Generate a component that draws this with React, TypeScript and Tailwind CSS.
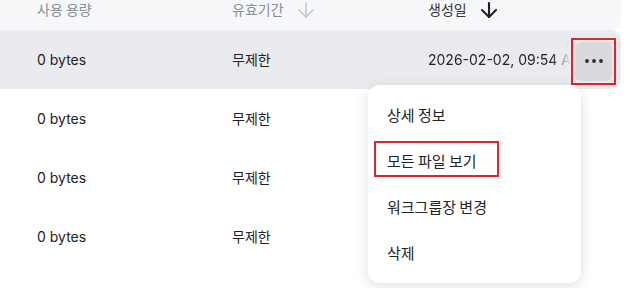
import React from 'react';
import { ArrowDown } from 'lucide-react';

const ROWS = [
  { size: '0 bytes', expiry: '무제한', created: '2026-02-02, 09:54 AM' },
  { size: '0 bytes', expiry: '무제한', created: '2026-02-02, 09:51 AM' },
  { size: '0 bytes', expiry: '무제한', created: '2026-02-02, 09:48 AM' },
  { size: '0 bytes', expiry: '무제한', created: '2026-02-02, 09:40 AM' },
  { size: '0 bytes', expiry: '무제한', created: '2026-02-01, 18:12 PM' },
];

const MENU = ['상세 정보', '모든 파일 보기', '워크그룹장 변경', '삭제'];

const App: React.FC = () => {
  return (
    <div
      className="relative w-[630px] h-[288px] overflow-hidden bg-white text-[14px] text-[#1f2126]"
      style={{ fontFamily: '"Noto Sans CJK KR", Inter, "Noto Sans", sans-serif' }}
    >
      <div className="w-[621px]">
        {/* header */}
        <div className="flex items-start h-[30px] pl-[37px] bg-[#f6f7f9] rounded-br-[10px]">
          <div className="w-[195px] h-[19px] leading-[19px] text-[#8b8f96]">사용 용량</div>
          <div className="w-[196px] h-[19px] flex items-center gap-[10px] leading-[19px] text-[#8b8f96]">
            유효기간
            <ArrowDown size={24} strokeWidth={1.6} className="text-[#c4c7cc]" />
          </div>
          <div className="h-[19px] flex items-center gap-[10px] leading-[19px] text-[#33363b]">
            생성일
            <ArrowDown size={24} strokeWidth={2.1} className="text-[#1f2126]" />
          </div>
        </div>

        {ROWS.map((row, i) => (
          <div
            key={i}
            className={`flex items-center h-[59px] pl-[37px] rounded-r-[10px] ${
              i === 0 ? 'bg-[#eaebee]' : 'bg-white'
            }`}
            style={{ fontFamily: 'Inter, "Noto Sans CJK KR", sans-serif' }}
          >
            <div className="w-[195px]">{row.size}</div>
            <div className="w-[196px]">{row.expiry}</div>
            <div className="w-[143px] overflow-hidden whitespace-nowrap [mask-image:linear-gradient(to_right,black_86%,transparent)]">
              {row.created}
            </div>
            {i === 0 && (
              <div className="relative ml-[4px] mt-[3px]">
                <button className="flex items-center justify-center w-[37px] h-[39px] rounded-[6px] bg-[#d8dadd]">
                  <svg width="20" height="6" viewBox="0 0 20 6">
                    <circle cx="3" cy="3" r="1.9" fill="#2a2c30" />
                    <circle cx="10" cy="3" r="1.9" fill="#2a2c30" />
                    <circle cx="17" cy="3" r="1.9" fill="#2a2c30" />
                  </svg>
                </button>
                <div className="absolute -left-[4px] -top-[4px] w-[45px] h-[47px] border-2 border-[#e0242c]" />
              </div>
            )}
          </div>
        ))}
      </div>

      {/* dropdown menu */}
      <div className="absolute left-[368px] top-[85px] w-[213px] py-[7px] bg-white rounded-[12px] shadow-[0_3px_14px_rgba(0,0,0,0.13)]">
        {MENU.map((item, i) => (
          <div key={item} className="relative flex items-center h-[46px] pl-[19px] text-[15px] text-[#222428]">
            {item}
            {i === 1 && (
              <div className="absolute left-[6px] top-[3px] w-[125px] h-[36px] border-2 border-[#e0242c]" />
            )}
          </div>
        ))}
      </div>
    </div>
  );
};

export default App;
